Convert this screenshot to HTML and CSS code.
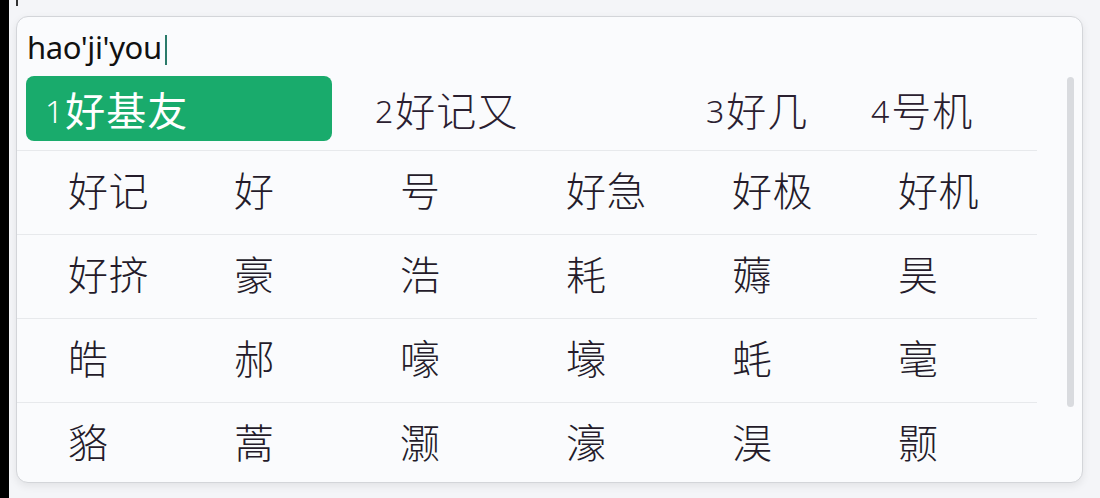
FILE: index.html
```html
<!DOCTYPE html>
<html lang="zh-CN">
<head>
<meta charset="utf-8">
<link rel="stylesheet" href="styles.css">
</head>
<body>
<div class="page">
  <div class="edge"></div>
  <div class="stage">
    <div class="top-caret"></div>
    <div class="panel">
      <div class="main">
        <div class="input">hao'ji'you<span class="caret"></span></div>
        <div class="cands">
          <div class="cand c1 selected"><span class="num">1</span><span class="word">好基友</span></div>
          <div class="cand c2"><span class="num">2</span><span class="word">好记又</span></div>
          <div class="cand c3"><span class="num">3</span><span class="word">好几</span></div>
          <div class="cand c4"><span class="num">4</span><span class="word">号机</span></div>
        </div>
        <div class="grid">
          <div class="row"><span>好记</span><span>好</span><span>号</span><span>好急</span><span>好极</span><span>好机</span></div>
          <div class="row"><span>好挤</span><span>豪</span><span>浩</span><span>耗</span><span>薅</span><span>昊</span></div>
          <div class="row"><span>皓</span><span>郝</span><span>嚎</span><span>壕</span><span>蚝</span><span>毫</span></div>
          <div class="row"><span>貉</span><span>蒿</span><span>灏</span><span>濠</span><span>淏</span><span>颢</span></div>
        </div>
      </div>
      <div class="scroll"><div class="thumb"></div></div>
    </div>
  </div>
</div>
</body>
</html>
```
FILE: styles.css
```css
html, body {
  margin: 0;
  padding: 0;
  height: 100%;
}
body {
  background: #f4f5f8;
  font-family: "Noto Sans CJK SC", "Noto Sans", sans-serif;
  overflow: hidden;
}
.page {
  display: flex;
  height: 498px;
}
.edge {
  width: 9px;
  background: #000;
  flex: none;
}
.stage {
  position: relative;
  flex: 1;
  padding: 16px 0 0 7px;
}
.top-caret {
  position: absolute;
  left: 7px;
  top: 0;
  width: 2px;
  height: 6px;
  background: #333;
}
.panel {
  width: 1067px;
  height: 467px;
  box-sizing: border-box;
  border: 1px solid #d3d5d9;
  border-radius: 12px;
  background: #fafbfd;
  box-shadow: 0 3px 8px rgba(0, 0, 0, 0.08);
  display: flex;
  overflow: hidden;
}
.main {
  width: 1020px;
  flex: none;
}
.input {
  height: 59px;
  line-height: 60px;
  padding-left: 10px;
  font-family: "Noto Sans", "Open Sans", sans-serif;
  font-size: 31px;
  color: #111;
  letter-spacing: -0.4px;
}
.caret {
  display: inline-block;
  width: 2px;
  height: 30px;
  background: #2a7a6a;
  vertical-align: -6px;
  margin-left: 3px;
}
.cands {
  display: flex;
  height: 75px;
  padding-left: 9px;
  border-bottom: 1px solid #e7e9ec;
  box-sizing: border-box;
}
.cand {
  height: 65px;
  display: flex;
  align-items: center;
  padding-left: 19px;
  box-sizing: border-box;
  color: #2a2030;
}
.c1 { width: 306px; }
.c2 { width: 331px; margin-left: 24px; }
.c3 { width: 165px; }
.c4 { width: 160px; }
.cand.selected {
  background: #19ab6c;
  border-radius: 8px;
  color: #fff;
}
.num {
  font-family: "Noto Sans", "Open Sans", sans-serif;
  font-weight: 300;
  font-size: 32px;
  margin-right: 2px;
  position: relative;
  top: 2px;
}
.word {
  font-size: 40px;
  font-weight: 300;
  letter-spacing: 1px;
}
.selected .word { font-weight: 400; }
.grid {
  display: flex;
  flex-direction: column;
}
.row {
  height: 84px;
  display: grid;
  grid-template-columns: repeat(6, 166px);
  align-items: center;
  padding-left: 51px;
  padding-bottom: 8px;
  border-bottom: 1px solid #e7e9ec;
  box-sizing: border-box;
  font-size: 40px;
  font-weight: 300;
  color: #241b2a;
  letter-spacing: 0.5px;
}
.row:last-child { border-bottom: none; }
.scroll {
  flex: none;
  width: 7px;
  margin-left: 30px;
  padding-top: 60px;
}
.thumb {
  width: 7px;
  height: 330px;
  border-radius: 4px;
  background: #d9dbdf;
}
```
